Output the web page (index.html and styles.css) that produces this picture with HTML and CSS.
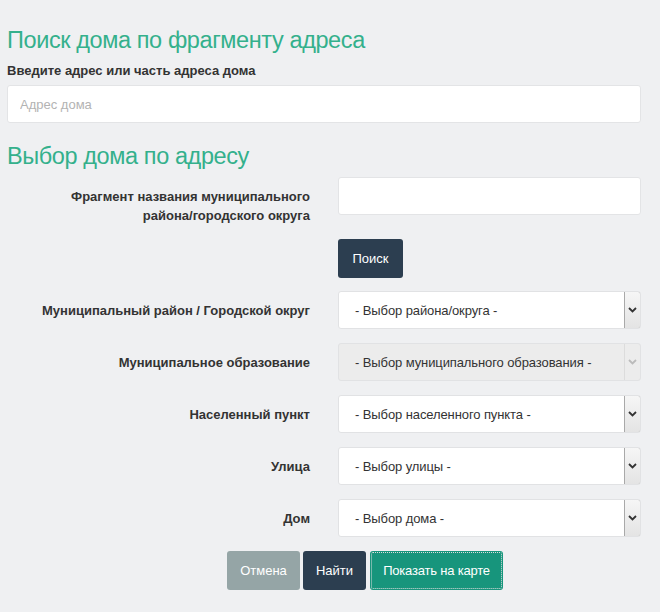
FILE: index.html
```html
<!DOCTYPE html>
<html lang="ru">
<head>
    <meta charset="UTF-8">
    <meta name="viewport" content="width=device-width, initial-scale=1.0">
    <title>Поиск дома</title>
    <link rel="stylesheet" href="styles.css">
</head>
<body>
    <div class="container">
        <h2>Поиск дома по фрагменту адреса</h2>
        <label class="top-label" for="address">Введите адрес или часть адреса дома</label>
        <input type="text" id="address" class="field" placeholder="Адрес дома">

        <h2 class="second">Выбор дома по адресу</h2>
        <form id="houseForm" class="form-horizontal">
            <div class="row row-first">
                <label for="fragment">Фрагмент названия муниципального района/городского округа</label>
                <input type="text" id="fragment" class="field">
            </div>
            <div class="row row-btn">
                <span></span>
                <div><button type="button" class="btn btn-dark btn-search">Поиск</button></div>
            </div>
            <div class="row">
                <label>Муниципальный район / Городской округ</label>
                <div class="select">
                    <span class="select-text">- Выбор района/округа -</span>
                    <span class="select-arrow"><svg width="9" height="6" viewBox="0 0 9 6"><path d="M1 1l3.5 3.5L8 1" fill="none" stroke="currentColor" stroke-width="1.8"/></svg></span>
                </div>
            </div>
            <div class="row">
                <label>Муниципальное образование</label>
                <div class="select disabled">
                    <span class="select-text">- Выбор муниципального образования -</span>
                    <span class="select-arrow"><svg width="9" height="6" viewBox="0 0 9 6"><path d="M1 1l3.5 3.5L8 1" fill="none" stroke="currentColor" stroke-width="1.8"/></svg></span>
                </div>
            </div>
            <div class="row">
                <label>Населенный пункт</label>
                <div class="select">
                    <span class="select-text">- Выбор населенного пункта -</span>
                    <span class="select-arrow"><svg width="9" height="6" viewBox="0 0 9 6"><path d="M1 1l3.5 3.5L8 1" fill="none" stroke="currentColor" stroke-width="1.8"/></svg></span>
                </div>
            </div>
            <div class="row">
                <label>Улица</label>
                <div class="select">
                    <span class="select-text">- Выбор улицы -</span>
                    <span class="select-arrow"><svg width="9" height="6" viewBox="0 0 9 6"><path d="M1 1l3.5 3.5L8 1" fill="none" stroke="currentColor" stroke-width="1.8"/></svg></span>
                </div>
            </div>
            <div class="row">
                <label>Дом</label>
                <div class="select">
                    <span class="select-text">- Выбор дома -</span>
                    <span class="select-arrow"><svg width="9" height="6" viewBox="0 0 9 6"><path d="M1 1l3.5 3.5L8 1" fill="none" stroke="currentColor" stroke-width="1.8"/></svg></span>
                </div>
            </div>
            <div class="actions">
                <button type="button" class="btn btn-grey">Отмена</button>
                <button type="button" class="btn btn-dark">Найти</button>
                <button type="button" class="btn btn-green">Показать на карте</button>
            </div>
        </form>
    </div>
</body>
</html>
```

FILE: styles.css
```css
body {
    font-family: "Liberation Sans", Arial, sans-serif;
    background-color: #eff0f2;
    color: #333;
    margin: 0;
    padding: 0;
}
.container {
    width: 634px;
    padding: 25px 0 0 7px;
}
h2 {
    font-family: "Liberation Sans", Arial, sans-serif;
    font-weight: normal;
    font-size: 23.5px;
    letter-spacing: -0.4px;
    color: #34b08c;
    margin: 0 0 8px;
    line-height: 30px;
}
h2.second {
    margin-top: 18px;
    margin-bottom: 6px;
}
.top-label {
    display: block;
    font-size: 13px;
    font-weight: bold;
    color: #333;
    margin-bottom: 7px;
}
.field {
    display: block;
    box-sizing: border-box;
    width: 100%;
    height: 38px;
    padding: 0 12px;
    border: 1px solid #e3e4e6;
    border-radius: 3px;
    background-color: #fff;
    font-family: "Liberation Sans", Arial, sans-serif;
    font-size: 13px;
    color: #333;
}
.field::placeholder {
    color: #b3b3b3;
}
.row {
    display: grid;
    grid-template-columns: 303px 303px;
    column-gap: 28px;
    align-items: center;
    margin-bottom: 14px;
}
.row label {
    text-align: right;
    font-size: 13px;
    font-weight: bold;
    color: #333;
    line-height: 19px;
}
.row-first {
    align-items: start;
    margin-bottom: 14px;
}
.row-first label {
    padding-left: 40px;
    padding-top: 10px;
}
.row-btn {
    margin-bottom: 13px;
}
.select {
    display: flex;
    box-sizing: border-box;
    height: 38px;
    border: 1px solid #e1e2e4;
    border-radius: 3px;
    background-color: #fff;
    overflow: hidden;
}
.select-text {
    flex: 1;
    display: flex;
    align-items: center;
    padding-left: 16px;
    font-size: 13px;
    letter-spacing: -0.1px;
    color: #333;
}
.select-arrow {
    width: 15px;
    margin: -1px -1px -1px 0;
    display: flex;
    align-items: center;
    justify-content: center;
    border: 1px solid #a9a9a9;
    border-radius: 0 3px 3px 0;
    background: linear-gradient(#f6f6f6, #e4e4e4);
    color: #333;
}
.select.disabled {
    background-color: #ececec;
}
.select.disabled .select-arrow {
    border-color: #dcdcdc;
    background: #ececec;
    color: #bbb;
}
.btn {
    height: 39px;
    border: none;
    border-radius: 3px;
    font-family: "Liberation Sans", Arial, sans-serif;
    font-size: 13px;
    color: #fff;
    padding: 0 14px;
    cursor: pointer;
}
.btn-search {
    width: 65px;
    padding: 0;
}
.btn-dark {
    background-color: #2c3e50;
}
.btn-grey {
    background-color: #95a5a6;
}
.btn-green {
    background-color: #17957c;
    outline: 1px dotted #ddd;
    outline-offset: -2px;
}
.actions {
    display: flex;
    gap: 3px;
    margin-left: 220px;
    margin-top: 0;
}
.actions .btn-grey {
    width: 73px;
    padding: 0;
}
.actions .btn-dark {
    width: 63px;
    padding: 0;
}
.actions .btn-green {
    width: 133px;
    padding: 0;
    margin-left: 1px;
    letter-spacing: -0.2px;
}
```
